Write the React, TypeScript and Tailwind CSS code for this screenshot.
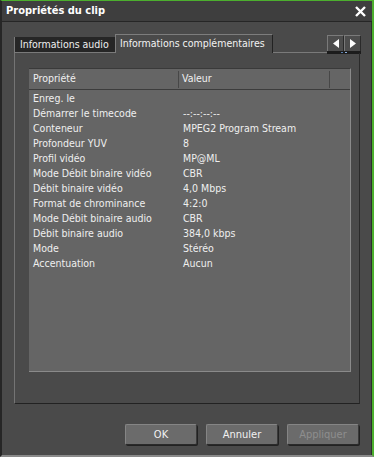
const rows: [string, string][] = [
  ["Enreg. le", ""],
  ["Démarrer le timecode", "--:--:--:--"],
  ["Conteneur", "MPEG2 Program Stream"],
  ["Profondeur YUV", "8"],
  ["Profil vidéo", "MP@ML"],
  ["Mode Débit binaire vidéo", "CBR"],
  ["Débit binaire vidéo", "4,0 Mbps"],
  ["Format de chrominance", "4:2:0"],
  ["Mode Débit binaire audio", "CBR"],
  ["Débit binaire audio", "384,0 kbps"],
  ["Mode", "Stéréo"],
  ["Accentuation", "Aucun"],
]

function DlgButton({ label, disabled }: { label: string; disabled?: boolean }) {
  return (
    <button
      className={
        "w-[72px] h-[21px] rounded-[2px] bg-[#6b6b6b] border border-[#858585] border-b-[#2a2a2a] border-r-[#3a3a3a] shadow-[1px_1px_0_#222] text-[11px] leading-none " +
        (disabled ? "text-[#8e8e8e]" : "text-[#f2f2f2]")
      }
    >
      {label}
    </button>
  )
}

export default function App() {
  return (
    <div
      className="w-[374px] h-[457px] flex flex-col bg-[#4a4a4a] border-t border-t-[#4caf2e] border-r-2 border-r-[#4caf2e] border-l-2 border-l-[#262626] border-b-2 border-b-[#8a8a8a] text-[#ececec] overflow-hidden"
      style={{ fontFamily: '"DejaVu Sans Condensed", "Liberation Sans", sans-serif' }}
    >
      {/* Title bar */}
      <div className="h-[21px] shrink-0 flex items-center justify-between pl-[4px] pr-[6px] bg-[#3e3e3e] border-b border-[#262626]">
        <span className="text-[11px] font-bold text-white">Propriétés du clip</span>
        <svg width="11" height="11" viewBox="0 0 11 11">
          <path d="M1 1 L10 10 M10 1 L1 10" stroke="#fff" strokeWidth="2.4" />
        </svg>
      </div>

      <div className="flex-1 flex flex-col border-r border-[#2e2e2e]">
        {/* Tabs */}
        <div className="mt-[12px] ml-[12px] mr-[10px] h-[19px] flex items-end whitespace-nowrap">
          <div className="h-[16px] w-[101px] shrink-0 flex items-center pl-[5px] bg-[#262626] border-l border-[#7a7a7a] text-[10.5px] text-[#efefef] border-b border-b-[#7a7a7a]">
            Informations audio
          </div>
          <div className="h-[19px] w-[158px] shrink-0 flex items-center pl-[4px] bg-[#4a4a4a] border-t border-l border-[#7d7d7d] border-r border-r-[#222] text-[10.5px] text-[#f2f2f2]">
            Informations complémentaires
          </div>
          <div className="flex-1 h-[1px] bg-[#7a7a7a]" />
          <div className="flex flex-col h-[19px] mb-[-1px]">
            <div className="flex h-[16px]">
              <div className="w-[17px] h-[16px] flex items-center justify-center bg-[#4d4d4d] border-t border-l border-[#7a7a7a] border-r border-r-[#2a2a2a]">
                <svg width="6" height="9" viewBox="0 0 6 9"><path d="M6 0 L0 4.5 L6 9 Z" fill="#fff" /></svg>
              </div>
              <div className="w-[17px] h-[16px] flex items-center justify-center bg-[#4d4d4d] border-t border-l border-[#7a7a7a] border-r border-r-[#2a2a2a]">
                <svg width="6" height="9" viewBox="0 0 6 9"><path d="M0 0 L6 4.5 L0 9 Z" fill="#fff" /></svg>
              </div>
            </div>
            <div className="h-[3px] bg-[#1c1c1c] flex justify-between px-[14px]">
              <span className="w-[2px] h-[1px] mt-[1px] bg-[#5a7fb0]" />
              <span className="w-[2px] h-[1px] mt-[1px] bg-[#8ab0e0]" />
            </div>
          </div>
        </div>

        {/* Panel */}
        <div className="ml-[12px] mr-[11px] h-[351px] border-l border-[#747474] border-r border-r-[#2a2a2a] border-b border-b-[#222] pt-[15px] pl-[14px] pr-[8px]">
          <div className="h-[304px] bg-[#656565] border-t border-[#3a3a3a] border-r border-r-[#8a8a8a] border-b border-b-[#8a8a8a]">
            <div className="h-[21px] flex items-center border-b border-[#3c3c3c] text-[10.5px] text-[#f0f0f0]">
              <div className="w-[150px] h-[17px] flex items-center pl-[4px] border-r border-[#474747]">Propriété</div>
              <div className="w-[151px] h-[17px] flex items-center pl-[3px] border-r border-[#474747]">Valeur</div>
            </div>
            <div className="pt-[1px]">
              {rows.map(([k, v], i) => (
                <div key={i} className="h-[15px] flex items-center text-[10.5px] text-[#efefef]">
                  <div className="w-[150px] pl-[4px] whitespace-nowrap">{k}</div>
                  <div className="pl-[4px] whitespace-nowrap">{v}</div>
                </div>
              ))}
            </div>
          </div>
        </div>

        {/* Buttons */}
        <div className="mt-[20px] flex justify-end gap-[9px] pr-[12px]">
          <DlgButton label="OK" />
          <DlgButton label="Annuler" />
          <DlgButton label="Appliquer" disabled />
        </div>
      </div>
    </div>
  )
}
